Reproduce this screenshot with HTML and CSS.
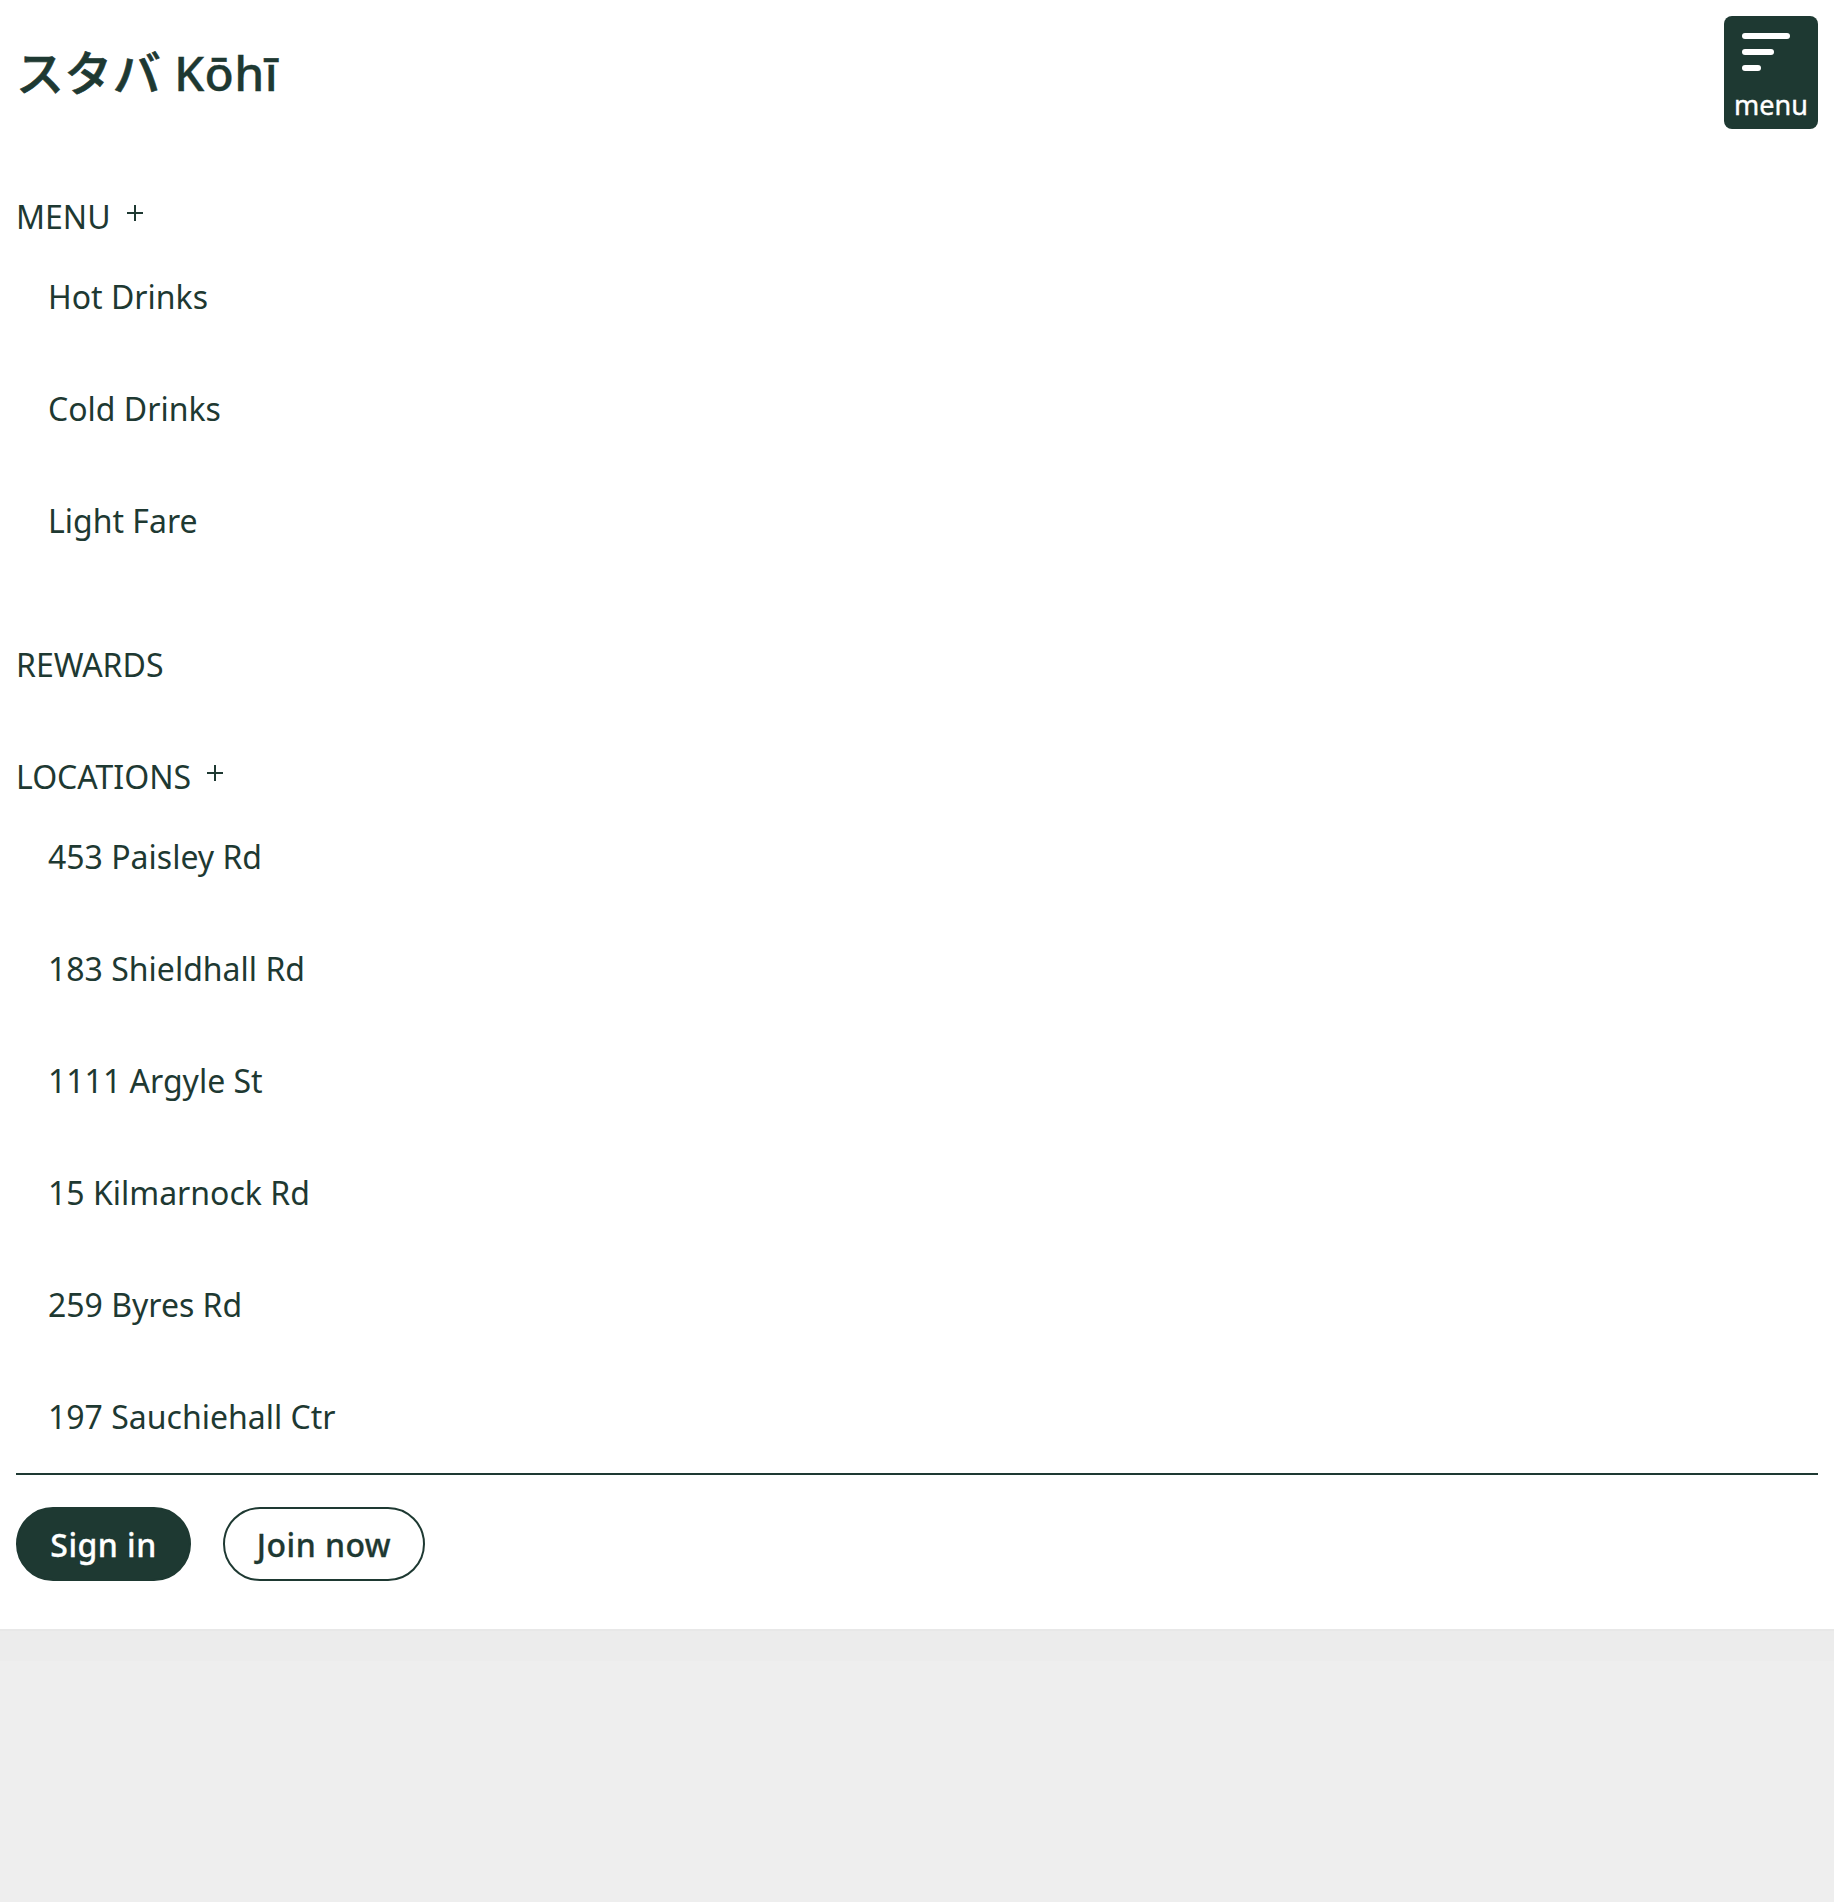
FILE: index.html
```html
<!DOCTYPE html>
<html lang="en">
<head>
<meta charset="utf-8">
<title>スタバ Kōhī</title>
<link rel="stylesheet" href="styles.css">
</head>
<body>
<header class="site-header">
  <div class="top-bar">
    <h1 class="brand"><span class="brand-kana" lang="ja">スタバ</span> Kōhī</h1>
    <button class="menu-button" type="button">
      <svg class="menu-icon" width="50" height="40" viewBox="0 0 50 40" fill="#fff" aria-hidden="true">
        <rect x="0" y="0" width="48" height="6" rx="3"/>
        <rect x="0" y="16" width="32" height="6" rx="3"/>
        <rect x="0" y="32" width="19" height="6" rx="3"/>
      </svg>
      <span class="menu-label">menu</span>
    </button>
  </div>
  <nav class="nav">
    <section class="group">
      <div class="heading">MENU
        <svg class="plus" width="16" height="16" viewBox="0 0 16 16" aria-hidden="true"><path d="M8 0V16M0 8H16" stroke="currentColor" stroke-width="2"/></svg>
      </div>
      <ul class="links">
        <li>Hot Drinks</li>
        <li>Cold Drinks</li>
        <li>Light Fare</li>
      </ul>
    </section>
    <section class="group rewards">
      <div class="heading">REWARDS</div>
    </section>
    <section class="group">
      <div class="heading">LOCATIONS
        <svg class="plus" width="16" height="16" viewBox="0 0 16 16" aria-hidden="true"><path d="M8 0V16M0 8H16" stroke="currentColor" stroke-width="2"/></svg>
      </div>
      <ul class="links">
        <li>453 Paisley Rd</li>
        <li>183 Shieldhall Rd</li>
        <li>1111 Argyle St</li>
        <li>15 Kilmarnock Rd</li>
        <li>259 Byres Rd</li>
        <li>197 Sauchiehall Ctr</li>
      </ul>
    </section>
  </nav>
  <div class="account">
    <button class="pill pill-solid" type="button">Sign in</button>
    <button class="pill" type="button">Join now</button>
  </div>
</header>
</body>
</html>
```
FILE: styles.css
```css
* {
  box-sizing: border-box;
}

body {
  margin: 0;
  min-height: 1902px;
  background: #eee;
  color: #1e3932;
  font: 32px/48px "Noto Sans", "Noto Sans CJK JP", sans-serif;
}

.site-header {
  height: 1629px;
  padding: 16px 16px 0;
  background: #fff;
  box-shadow: 0 2px 0 rgba(0, 0, 0, 0.015), 0 32px 0 rgba(0, 0, 0, 0.008);
}

.top-bar {
  display: flex;
  justify-content: space-between;
  align-items: flex-start;
  height: 177px;
}

.brand {
  margin: 21px 0 0;
  font-size: 48px;
  line-height: 72px;
  font-weight: 500;
  letter-spacing: 0.35px;
  -webkit-text-stroke: 0.3px currentColor;
}

.brand-kana {
  -webkit-text-stroke: 0.7px currentColor;
}

.menu-button {
  display: flex;
  flex-direction: column;
  width: 94px;
  height: 113px;
  padding: 17px 0 0;
  border: 0;
  border-radius: 8px;
  background: #1e3932;
  color: #fff;
  font: inherit;
}

.menu-icon {
  margin-left: 18px;
}

.menu-label {
  align-self: center;
  margin-top: 14px;
  font-size: 27px;
  line-height: 36px;
  -webkit-text-stroke: 0.4px currentColor;
}

.heading {
  display: flex;
  align-items: flex-start;
  gap: 16px;
}

.plus {
  margin-top: 12px;
}

.links {
  display: flex;
  flex-direction: column;
  gap: 64px;
  margin: 32px 0 0;
  padding: 0 0 0 32px;
  list-style: none;
}

.rewards {
  padding: 96px 0 64px;
}

.account {
  display: flex;
  gap: 32px;
  margin-top: 32px;
  padding-top: 32px;
  border-top: 2px solid #1e3932;
}

.pill {
  width: 202px;
  height: 74px;
  padding: 1px 0 0;
  border: 2px solid #1e3932;
  border-radius: 37px;
  background: #fff;
  color: #1e3932;
  font: 500 32px/44px "Noto Sans", sans-serif;
  letter-spacing: 0.45px;
  -webkit-text-stroke: 0.3px currentColor;
}

.pill-solid {
  width: 175px;
  background: #1e3932;
  color: #fff;
}
```
